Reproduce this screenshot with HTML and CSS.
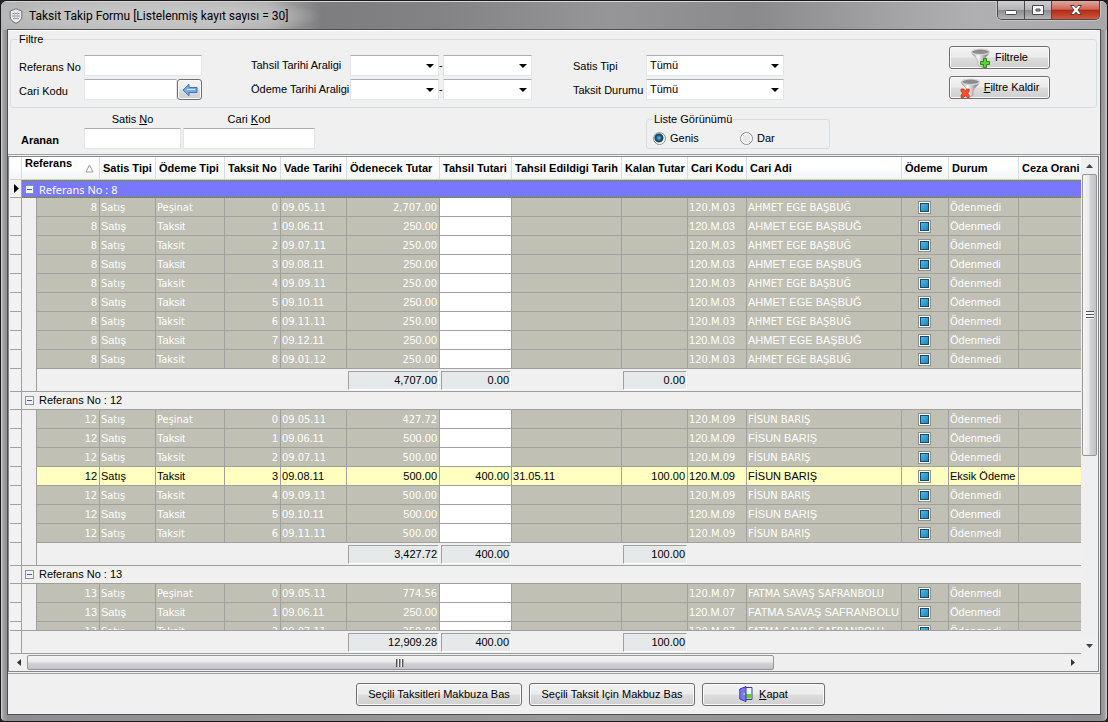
FILE: index.html
```html
<!DOCTYPE html>
<html lang="tr">
<head>
<meta charset="utf-8">
<title>Taksit Takip Formu</title>
<link rel="stylesheet" href="styles.css">
</head>
<body>
<div class="window">
  <header class="titlebar">
    <svg class="app-icon" width="14" height="16" viewBox="0 0 14 16"><path d="M7 .8 12.800 3v5.500C12.800 12 10 14 7 15.300 4 14 1.200 12 1.200 8.500V3z" fill="#e9ebed" stroke="#6d7278"/><path d="M3.500 5.500h7M3 8h8M4 10.500h6" stroke="#8b949d"/><path d="M5.500 4v7M8.500 4v7" stroke="#b8c0c8"/></svg>
    <h1 class="title">Taksit Takip Formu [Listelenmiş kayıt sayısı = 30]</h1>
    <div class="caption-buttons">
      <button class="cap" aria-label="Küçült"><svg width="14" height="12" viewBox="0 0 14 12"><rect x="1.500" y="6.500" width="11" height="4" rx="1" fill="#fff" stroke="#4a4c55"/></svg></button>
      <button class="cap" aria-label="Ekranı kapla"><svg width="14" height="12" viewBox="0 0 14 12"><path d="M1.500 1.500h11v9h-11zM5 5h4v2H5z" fill="#fff" fill-rule="evenodd" stroke="#4a4c55"/></svg></button>
      <button class="cap cap-close" aria-label="Pencereyi kapat"><svg width="14" height="12" viewBox="0 0 14 12"><path d="M1.500 1.500h3.500l2 2.300 2-2.300h3.500L9 6l3.500 4.500H9L7 8.200 5 10.500H1.500L5 6z" fill="#fff" stroke="#5a3a40"/></svg></button>
    </div>
  </header>

  <main class="client">
    <fieldset class="filter">
      <legend>Filtre</legend>
      <div class="filter-ids">
        <label for="refno">Referans No</label>
        <input class="box" id="refno" type="text">
        <label for="carikodu">Cari Kodu</label>
        <div class="pick">
          <input class="box" id="carikodu" type="text">
          <button class="btn pick-btn" aria-label="Cari seç"><svg width="16" height="14" viewBox="0 0 16 14"><path d="M1 7 7 1.300v3.200h8v5H7v3.200z" fill="#78ade4" stroke="#3f72b8"/><path d="M5 6.500h8" stroke="#d3e6fa"/></svg></button>
        </div>
      </div>
      <div class="filter-dates">
        <label for="t1">Tahsil Tarihi Araligi</label>
        <span class="combo"><select class="box" id="t1"><option></option></select></span>
        <span>-</span>
        <span class="combo"><select class="box" aria-label="Tahsil tarihi bitiş"><option></option></select></span>
        <label for="o1">Ödeme Tarihi Araligi</label>
        <span class="combo"><select class="box" id="o1"><option></option></select></span>
        <span>-</span>
        <span class="combo"><select class="box" aria-label="Ödeme tarihi bitiş"><option></option></select></span>
      </div>
      <div class="filter-types">
        <label for="stip">Satis Tipi</label>
        <span class="combo"><select class="box" id="stip"><option>Tümü</option></select></span>
        <label for="tdur">Taksit Durumu</label>
        <span class="combo"><select class="box" id="tdur"><option>Tümü</option></select></span>
      </div>
      <div class="filter-actions">
        <button class="btn"><svg width="20" height="20" viewBox="0 0 20 20"><defs><linearGradient id="cone"><stop offset="0" stop-color="#8a8a8a"/><stop offset=".35" stop-color="#fbfbfb"/><stop offset=".6" stop-color="#c4c4c4"/><stop offset="1" stop-color="#5a5a5a"/></linearGradient></defs><path d="M.5 4C1 7 6.500 10 7 13v4l5 2.500V13c.5-3 6-6 6.500-9z" fill="url(#cone)" stroke="#9a9a9a" stroke-width=".6"/><ellipse cx="9.500" cy="3.800" rx="9" ry="2.800" fill="#8d8d8d" stroke="#d8d8d8" stroke-width="1.200"/><path d="M12.500 10.500h3v3h3v3h-3v3h-3v-3h-3v-3h3z" fill="#5fd136" stroke="#268a16"/></svg>Filtrele</button>
        <button class="btn"><svg width="20" height="20" viewBox="0 0 20 20"><path d="M1 4c.5 3 6.500 6 7 9v6.500l5-2.500v-4c.5-3 6-6 6.500-9z" fill="url(#cone)" stroke="#9a9a9a" stroke-width=".6"/><ellipse cx="10.500" cy="3.800" rx="9" ry="2.800" fill="#8d8d8d" stroke="#d8d8d8" stroke-width="1.200"/><path d="M1 11h2.800l1.500 2.200L6.800 11h2.400v2.500L7.800 15.200l1.400 2v2.300H6.800l-1.500-2-1.500 2H1v-2.300l1.600-2L1 13.200z" fill="#f4512c" stroke="#c32a10" stroke-width=".7"/></svg><span><u>F</u>iltre Kaldir</span></button>
      </div>
    </fieldset>

    <section class="search">
      <strong class="search-title">Aranan</strong>
      <div class="search-field satis"><label for="satisno">Satis <u>N</u>o</label><input class="box" id="satisno" type="text"></div>
      <div class="search-field cari"><label for="carikod">Cari <u>K</u>od</label><input class="box" id="carikod" type="text"></div>
      <fieldset class="view">
        <legend>Liste Görünümü</legend>
        <label><input type="radio" name="view" checked>Genis</label>
        <label><input type="radio" name="view">Dar</label>
      </fieldset>
    </section>

    <section class="grid">
      <div class="grid-main">
        <div class="grid-body">
          <table class="rows">
            <colgroup class="cols"></colgroup>
            <thead>
              <tr>
                <th></th><th colspan="2" class="sorted">Referans<svg width="9" height="9" viewBox="0 0 9 9"><path d="M4.500 1 8 8H1z" fill="#fff" stroke="#9a9a9a"/></svg></th>
                <th>Satis Tipi</th><th>Ödeme Tipi</th><th>Taksit No</th><th>Vade Tarihi</th><th>Ödenecek Tutar</th><th>Tahsil Tutari</th><th>Tahsil Edildigi Tarih</th><th>Kalan Tutar</th><th>Cari Kodu</th><th>Cari Adi</th><th>Ödeme</th><th>Durum</th><th>Ceza Orani</th>
              </tr>
            </thead>
            <tbody id="rows"></tbody>
          </table>
        </div>
        <table class="rows totals">
          <colgroup class="cols"></colgroup>
          <tbody><tr class="sum"><td class="ind"></td><td colspan="6"></td><td><output>12,909.28</output></td><td><output>400.00</output></td><td></td><td><output>100.00</output></td><td colspan="5"></td></tr></tbody>
        </table>
      </div>
      <div class="vbar">
        <button class="arrow" aria-label="Yukarı"><svg width="7" height="4" viewBox="0 0 7 4"><path d="M0 4 3.500 0 7 4z" fill="#444"/></svg></button>
        <div class="track"><div class="thumb"><i></i></div></div>
        <button class="arrow" aria-label="Aşağı"><svg width="7" height="4" viewBox="0 0 7 4"><path d="M0 0 3.500 4 7 0z" fill="#444"/></svg></button>
      </div>
      <div class="hbar">
        <button class="arrow" aria-label="Sola"><svg width="4" height="7" viewBox="0 0 4 7"><path d="M4 0 0 3.500 4 7z" fill="#333"/></svg></button>
        <div class="track"><div class="thumb"><i></i></div></div>
        <button class="arrow" aria-label="Sağa"><svg width="4" height="7" viewBox="0 0 4 7"><path d="M0 0 4 3.500 0 7z" fill="#333"/></svg></button>
      </div>
    </section>

    <footer class="actions">
      <button class="btn wide">Seçili Taksitleri Makbuza Bas</button>
      <button class="btn wide">Seçili Taksit Için Makbuz Bas</button>
      <button class="btn"><svg width="14" height="16" viewBox="0 0 14 16"><path d="M5 1.500h8v12H5z" fill="#e8f6ff" stroke="#3a3aa0"/><path d="M7 8h5.500v4.500H7z" fill="#5fcf2a"/><path d="M.8 3 7 .6v15L.8 13z" fill="#7a78e8" stroke="#3a3aa0"/><path d="M4.500 8h1.500" stroke="#fff"/></svg><span><u>K</u>apat</span></button>
    </footer>
  </main>
</div>
<script src="grid.js"></script>
</body>
</html>
```
FILE: styles.css
```css
* { box-sizing: border-box; }
body, h1, fieldset { margin: 0; padding: 0; }
body, button, input, select {
  font: 11px/13px "Liberation Sans", Arial, sans-serif;
  color: #000;
}
body { background: #222; }

.window {
  display: flex;
  flex-direction: column;
  height: 100vh;
  padding: 0 7px 7px;
  border: 1px solid #1a1a1c;
  border-radius: 7px 7px 5px 5px;
  background: linear-gradient(90deg, #d8d8d8 0, #a3a2a4 2px, #8e8d8f 6px, #999 50%, #8e8d8f calc(100% - 6px), #a3a2a4 calc(100% - 2px), #d8d8d8 100%);
  overflow: hidden;
}
.titlebar {
  display: flex;
  align-items: center;
  gap: 6px;
  flex: none;
  height: 29px;
  margin: 0 -7px;
  padding: 0 0 1px 8px;
  background:
    radial-gradient(ellipse 170px 22px at 150px 14px, #c9c9c9 0, #c0c0c0 60%, transparent 100%),
    linear-gradient(90deg, #b4b4b4 0, #b0b0b0 24%, #7d7c7e 29%, #838284 40%, #969597 55%, #8a898b 68%, #a2a1a3 80%, #b0afb1 88%, #a8a7a9 100%);
  border-top: 1px solid #d6d6d6;
}
.title { flex: 1; font: 12px/16px Roboto, "Segoe UI", sans-serif; }
.caption-buttons {
  display: flex;
  align-self: flex-start;
  height: 19px;
  margin: -1px 7px 0 0;
  border: 1px solid #4c4b4e;
  border-top: 0;
  border-radius: 0 0 5px 5px;
  overflow: hidden;
  box-shadow: 0 0 0 1px #c4c3c5;
}
.cap {
  display: flex;
  align-items: center;
  justify-content: center;
  width: 27px;
  padding: 0;
  border: 0;
  border-right: 1px solid #4c4b4e;
  background: linear-gradient(#cfcfd0, #b4b3b5 48%, #8c8b8d 52%, #b5b4b6);
}
.cap-close { width: 47px; border: 0; background: linear-gradient(#e0a89e, #cd6a58 45%, #b02a16 52%, #d05b3c); }

.client {
  display: flex;
  flex-direction: column;
  flex: 1;
  min-height: 0;
  background: #f0f0f0;
  border-top: 1px solid #fff;
  outline: 1px solid #4f4f50;
}

.filter {
  display: flex;
  align-items: flex-start;
  flex: none;
  min-width: 0;
  height: 75px;
  margin: 2px 3px 0 2px;
  padding: 9px 46px 0 8px;
  border: 1px solid #d3dde6;
  border-radius: 3px;
}
legend { padding: 0 1px; line-height: 13px; }
.filter legend { margin-left: -1px; }
.filter-ids, .filter-dates, .filter-types { display: grid; grid-auto-rows: 21px; row-gap: 3px; align-items: center; }
.filter-ids { grid-template-columns: 65px 118px; margin-right: 49px; }
.filter-dates { grid-template-columns: 99px 89px 4px 89px; margin-right: 41px; }
.filter-types { grid-template-columns: 73px 138px; }
.filter-ids label { padding-top: 3px; }
.filter-types label { padding-top: 1px; }
.box {
  display: block;
  width: 100%;
  height: 21px;
  margin: 0;
  padding: 0 3px;
  border: 1px solid #e2e5ec;
  border-top-color: #abadb3;
  border-radius: 1px;
  background: #fff;
  appearance: none;
  outline: 0;
}
.pick { display: flex; }
.pick-btn { width: 25px; flex: none; }
.combo { position: relative; }
.combo::after {
  content: "";
  position: absolute;
  right: 5px;
  top: 9px;
  border: 4px solid transparent;
  border-top-color: #000;
  border-bottom: 0;
  pointer-events: none;
}
.btn {
  display: flex;
  align-items: center;
  justify-content: center;
  gap: 4px;
  padding: 0;
  border: 1px solid #707070;
  border-radius: 3px;
  background: linear-gradient(#f3f3f3, #ebebeb 49%, #dddddd 51%, #cfcfcf);
  box-shadow: inset 0 0 0 1px #fafafa;
}
.filter-actions { display: grid; gap: 7px; width: 101px; margin: -9px 0 0 auto; }
.filter-actions .btn { height: 23px; }

.search { display: flex; flex: none; height: 47px; padding: 5px 0 0 13px; border-bottom: 1px solid #a0a0a0; }
.search-title { width: 63px; padding-top: 21px; }
.search-field { margin-right: 2px; text-align: center; }
.search-field label { display: block; margin-bottom: 2px; }
.satis { width: 97px; }
.cari { width: 132px; }
.view {
  display: flex;
  align-items: center;
  min-width: 0;
  width: 184px;
  height: 36px;
  margin: 0 0 0 329px;
  padding: 2px 0 0 6px;
  border: 1px solid #d3dde6;
  border-radius: 3px;
}
.view label { display: flex; align-items: center; gap: 4px; width: 87px; }
.view input {
  appearance: none;
  width: 13px;
  height: 13px;
  margin: 0;
  border: 1px solid #8e8f8f;
  border-radius: 50%;
  background: radial-gradient(#e8e8e8 3px, #fff 5px);
}
.view input:checked { background: radial-gradient(circle at 45% 45%, #5fc4ee 0, #12517c 3px, #1d3c55 4px, #fff 5px); }

.grid {
  display: grid;
  grid-template: minmax(0, 1fr) 17px / minmax(0, 1fr) 17px;
  flex: 1;
  min-height: 0;
  margin: 1px 1px 0 0;
  border: 1px solid #82878f;
  background: #f0f0f0;
}
.grid-main { display: flex; flex-direction: column; min-height: 0; padding-left: 1px; }
.grid-body { flex: 1; min-height: 0; overflow: hidden; }
.rows { width: 100%; table-layout: fixed; border-collapse: separate; border-spacing: 0; white-space: nowrap; }
.rows th {
  height: 23px;
  padding: 0 0 0 3px;
  overflow: hidden;
  border-right: 1px solid #d8dce0;
  border-bottom: 1px solid #cfd3d8;
  background: linear-gradient(#fff 45%, #f2f3f5);
  text-align: left;
}
.rows th:last-child { border-right: 0; }
.rows .sorted { vertical-align: top; }
.sorted svg { float: right; margin: 7px 5px 0 0; }
.rows td { overflow: hidden; padding: 0 2px 0 1px; height: 19px; border: 0 solid #a0a0a0; border-width: 0 1px 1px 0; }
.rows td:last-child { border-right: 0; }
.rows .ind { background: #f2f2f2; padding: 0; }
.ind svg { display: block; margin-left: 4px; }
.rows .indent { border-bottom: 0; background: #f0f0f0; }
.item td { background: #c0c0b4; color: #fff; font: 11px/13px "DejaVu Sans Condensed", Tahoma, sans-serif; }
.item.alt td { font: 11px/13px "Liberation Sans", Arial, sans-serif; }
.item .num, .sum output { text-align: right; }
.item .open { background: #fff; }
.item.partial td { background: #ffffc0; color: #000; }
.item.partial .ind, .item .ind { background: #f2f2f2; }
.item.partial .indent, .item .indent { background: #f0f0f0; }
.check input {
  appearance: none;
  display: block;
  width: 13px;
  height: 13px;
  margin: 0 auto;
  border: 1px solid #8e8f8f;
  background: linear-gradient(135deg, #5cc8ee, #1576ac) padding-box;
  box-shadow: inset 0 0 0 1px #fff, inset 0 0 0 2px #17496d;
}
.rows .head td { height: 18px; }
.rows .group { padding: 0 0 0 3px; }
.group span { display: flex; align-items: center; gap: 5px; }
.group button {
  width: 9px;
  height: 9px;
  padding: 0;
  border: 1px solid #8a93a0;
  background: linear-gradient(#3f5fa8, #3f5fa8) center / 5px 1px no-repeat #f4f4f4;
}
.rows .current { background: #7777ff; color: #fff; border: 1px dotted #808020; border-width: 1px 0; font: 11px/13px "Noto Sans", Tahoma, sans-serif; }
.rows .sum td { height: 23px; padding: 1px; border-right: 0; }
.rows .sum .ind, .rows .sum .indent { border-right: 1px solid #a0a0a0; }
.rows .sum .indent { border-bottom: 1px solid #a0a0a0; }
.sum output {
  display: block;
  padding: 2px 1px 2px 0;
  border: 1px solid #fff;
  border-top-color: #a0a0a0;
  border-left-color: #a0a0a0;
  background: #e6e9ea;
}
.totals { flex: none; border-top: 1px solid #a0a0a0; }

.vbar, .hbar { display: flex; background: #efefef; }
.vbar { flex-direction: column; }
.hbar { margin-left: 1px; }
.arrow { display: flex; align-items: center; justify-content: center; flex: none; width: 17px; height: 17px; padding: 0; border: 0; background: #f0f0f0; }
.track { flex: 1; min-height: 0; }
.thumb { display: flex; align-items: center; justify-content: center; border: 1px solid #979797; border-radius: 2px; }
.vbar .thumb { width: 15px; height: 61%; margin: 0 1px; background: linear-gradient(90deg, #f5f5f5, #e9e9eb 48%, #d5d5d8 52%, #c2c2c6); }
.hbar .thumb { width: 72%; height: 15px; margin: 1px 0; background: linear-gradient(#f5f5f5, #e9e9eb 48%, #d5d5d8 52%, #c2c2c6); }
.thumb i { width: 8px; height: 8px; }
.vbar i { background: repeating-linear-gradient(#555 0 1px, #f5f5f5 1px 3px); }
.hbar i { background: repeating-linear-gradient(90deg, #555 0 1px, #aaa 1px 2px, #f5f5f5 2px 3px); }

.actions {
  display: flex;
  justify-content: center;
  align-items: center;
  gap: 7px;
  flex: none;
  height: 41px;
  margin-top: 1px;
  padding-left: 73px;
  border-top: 1px solid #a0a0a0;
}
.actions .btn { width: 123px; height: 23px; gap: 6px; }
.actions .wide { width: 166px; }
```
FILE: grid.js
```js
const widths = [12, 15, 63, 56, 69, 56, 66, 93, 72, 110, 66, 59, 155, 47, 70, 0];
document.querySelectorAll('.cols').forEach(group => {
  group.innerHTML = widths.map(w => w ? `<col style="width:${w}px">` : '<col>').join('');
});

const groups = [
  { ref: 8, code: '120.M.03', name: 'AHMET EGE BAŞBUĞ', first: '2,707.00', rate: '250.00', count: 9, sums: ['4,707.00', '0.00', '0.00'] },
  { ref: 12, code: '120.M.09', name: 'FİSUN BARIŞ', first: '427.72', rate: '500.00', count: 7, partial: 3, sums: ['3,427.72', '400.00', '100.00'] },
  { ref: 13, code: '120.M.07', name: 'FATMA SAVAŞ SAFRANBOLU', first: '774.56', rate: '250.00', count: 3 }
];

const pointer = '<svg width="5" height="9" viewBox="0 0 5 9"><path d="M0 0 5 4.500 0 9z"/></svg>';

function dueDate(i) {
  const month = (4 + i) % 12 + 1;
  const year = 11 + Math.floor((4 + i) / 12);
  return `09.${String(month).padStart(2, '0')}.${year}`;
}

function itemRow(g, i) {
  const part = g.partial === i;
  return `<tr class="item ${i % 2 ? 'alt' : ''} ${part ? 'partial' : ''}">
    <td class="ind"></td><td class="indent"></td><td class="num">${g.ref}</td><td>Satış</td>
    <td>${i ? 'Taksit' : 'Peşinat'}</td><td class="num">${i}</td><td>${dueDate(i)}</td>
    <td class="num">${i ? g.rate : g.first}</td><td class="num ${part ? '' : 'open'}">${part ? '400.00' : ''}</td>
    <td>${part ? '31.05.11' : ''}</td><td class="num">${part ? '100.00' : ''}</td>
    <td>${g.code}</td><td>${g.name}</td>
    <td class="check"><input type="checkbox" aria-label="Ödeme"></td>
    <td>${part ? 'Eksik Ödeme' : 'Ödenmedi'}</td><td></td></tr>`;
}

function sumRow(sums) {
  return `<tr class="sum"><td class="ind"></td><td class="indent"></td><td colspan="5"></td><td><output>${sums[0]}</output></td><td><output>${sums[1]}</output></td><td></td><td><output>${sums[2]}</output></td><td colspan="5"></td></tr>`;
}

document.getElementById('rows').innerHTML = groups.map((g, n) => `
  <tr class="head"><td class="ind">${n ? '' : pointer}</td><td colspan="15" class="group ${n ? '' : 'current'}"><span><button aria-label="Daralt"></button>Referans No : ${g.ref}</span></td></tr>
  ${Array.from({ length: g.count }, (_, i) => itemRow(g, i)).join('')}
  ${g.sums ? sumRow(g.sums) : ''}`).join('');
```
